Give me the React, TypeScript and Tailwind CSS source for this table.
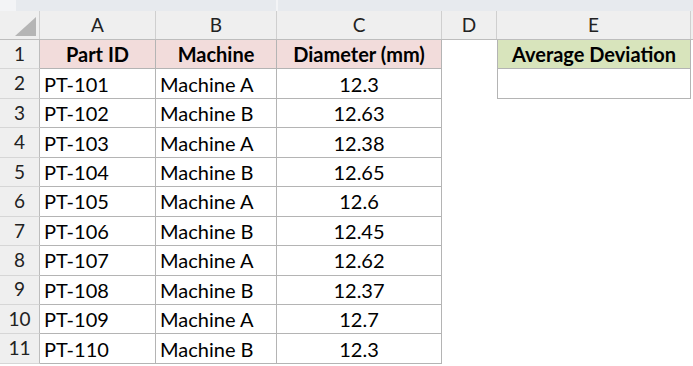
const cols = ["A", "B", "C", "D", "E"];

const rows: [string, string, string][] = [
  ["PT-101", "Machine A", "12.3"],
  ["PT-102", "Machine B", "12.63"],
  ["PT-103", "Machine A", "12.38"],
  ["PT-104", "Machine B", "12.65"],
  ["PT-105", "Machine A", "12.6"],
  ["PT-106", "Machine B", "12.45"],
  ["PT-107", "Machine A", "12.62"],
  ["PT-108", "Machine B", "12.37"],
  ["PT-109", "Machine A", "12.7"],
  ["PT-110", "Machine B", "12.3"],
];

const widths = ["w-[116px]", "w-[121px]", "w-[165px]", "w-[55px]", "w-[194px]"];
const rowH = "h-[29.45px]";

function RowNum({ n }: { n: number }) {
  return (
    <div
      className={`${rowH} w-[40px] shrink-0 flex items-center justify-center bg-[#efefef] border-r border-r-[#bdbdbd] border-b border-b-[#d6d6d6] text-[19px] text-[#222]`}
    >
      {n}
    </div>
  );
}

export default function App() {
  return (
    <div
      className="w-[693px] h-[366px] overflow-hidden bg-white text-black"
      style={{ fontFamily: "Lato, 'Open Sans', sans-serif" }}
    >
      {/* strip above the sheet */}
      <div className="h-[11px] bg-[#e7eaee] flex">
        <div className="w-[16px] bg-[#f3f4f6]" />
        <div className="w-[260px]" />
        <div className="w-[2px] bg-[#f3f4f6]" />
      </div>

      {/* column headers */}
      <div className="flex h-[29px] bg-[#efefef] border-b border-b-[#bdbdbd]">
        <div className="w-[40px] shrink-0 relative border-r border-r-[#cfcfcf]">
          <svg className="absolute left-[15px] top-[6px]" width="21" height="19" viewBox="0 0 21 19">
            <polygon points="21,0 21,19 0,19" fill="#b5b5b5" />
          </svg>
        </div>
        {cols.map((c, i) => (
          <div
            key={c}
            className={`${widths[i]} shrink-0 flex items-center justify-center border-r border-r-[#cfcfcf] text-[19px] text-[#222]`}
          >
            {c}
          </div>
        ))}
      </div>

      {/* row 1 */}
      <div className="flex">
        <RowNum n={1} />
        <div className={`${rowH} ${widths[0]} shrink-0 flex items-center justify-center bg-[#f2dcdb] border-r border-b border-[#b4b4b4] font-bold text-[20px]`}>
          Part ID
        </div>
        <div className={`${rowH} ${widths[1]} shrink-0 flex items-center justify-center bg-[#f2dcdb] border-r border-b border-[#b4b4b4] font-bold text-[20px]`}>
          Machine
        </div>
        <div className={`${rowH} ${widths[2]} shrink-0 flex items-center justify-center bg-[#f2dcdb] border-r border-b border-[#b4b4b4] font-bold text-[20px]`}>
          Diameter (mm)
        </div>
        <div className={`${rowH} ${widths[3]} shrink-0`} />
        <div className={`${rowH} ${widths[4]} shrink-0 flex items-center justify-center bg-[#d8e4bc] border-l border-r border-b border-[#b4b4b4] font-bold text-[20px]`}>
          Average Deviation
        </div>
      </div>

      {rows.map((r, i) => (
        <div key={r[0]} className="flex">
          <RowNum n={i + 2} />
          <div className={`${rowH} ${widths[0]} shrink-0 flex items-center pl-[4px] border-r border-b border-[#b4b4b4] text-[20px]`}>
            {r[0]}
          </div>
          <div className={`${rowH} ${widths[1]} shrink-0 flex items-center pl-[4px] border-r border-b border-[#b4b4b4] text-[20px]`}>
            {r[1]}
          </div>
          <div className={`${rowH} ${widths[2]} shrink-0 flex items-center justify-center border-r border-b border-[#b4b4b4] text-[20px]`}>
            {r[2]}
          </div>
          <div className={`${rowH} ${widths[3]} shrink-0`} />
          {i === 0 ? (
            <div className={`${rowH} ${widths[4]} shrink-0 border-l border-r border-b border-[#b4b4b4]`} />
          ) : (
            <div className={`${rowH} ${widths[4]} shrink-0`} />
          )}
        </div>
      ))}
    </div>
  );
}
